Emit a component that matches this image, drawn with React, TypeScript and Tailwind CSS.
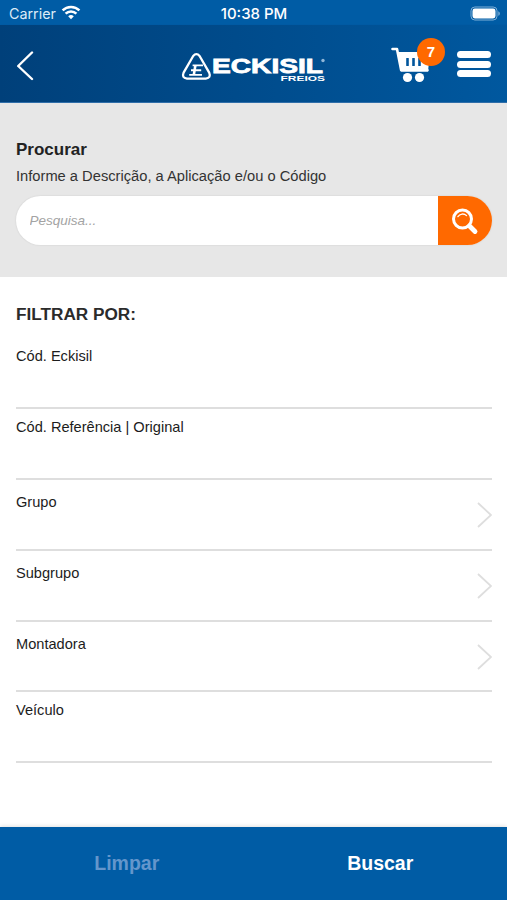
import { useState } from "react";

type Filter = { id: string; label: string; picker: boolean };

const FILTERS: Filter[] = [
  { id: "eckisil", label: "Cód. Eckisil", picker: false },
  { id: "referencia", label: "Cód. Referência | Original", picker: false },
  { id: "grupo", label: "Grupo", picker: true },
  { id: "subgrupo", label: "Subgrupo", picker: true },
  { id: "montadora", label: "Montadora", picker: true },
  { id: "veiculo", label: "Veículo", picker: false },
];

function StatusBar() {
  return (
    <div className="grid h-[25px] grid-cols-3 items-center bg-[#005ca5] pt-[3px] pr-[6px] pl-[9px] font-['Inter',sans-serif] text-[14.3px] leading-none text-white">
      <div className="flex items-center gap-[5px]">
        <span className="text-[#dcebf7]">Carrier</span>
        <svg className="-mt-[2px]" width="20" height="15" viewBox="0 0 20 15" fill="none" stroke="white" strokeWidth="2.5">
          <path d="M1.6 5.4a12 12 0 0 1 16.8 0" />
          <path d="M4.6 8.7a7.6 7.6 0 0 1 10.8 0" />
          <path d="M10 14.2 7.2 11.3a4 4 0 0 1 5.6 0Z" fill="white" stroke="none" />
        </svg>
      </div>
      <span className="-mt-[2px] -ml-[2px] text-center text-[15px] font-medium whitespace-nowrap">10:38 PM</span>
      <svg className="-mt-[2px] justify-self-end" width="31" height="15" viewBox="0 0 31 15">
        <rect x="1" y="1" width="26" height="13" rx="3.8" fill="none" stroke="#7fb0d8" strokeWidth="1" />
        <rect x="2.5" y="2.5" width="23" height="10" rx="2.4" fill="white" />
        <path d="M28.3 5.2c2 .8 2 3.8 0 4.6Z" fill="#7fb0d8" />
      </svg>
    </div>
  );
}

function Logo() {
  return (
    <svg width="147" height="37" viewBox="0 0 147 37" fill="white">
      <path
        d="M13.2 11q3.2-3.6 6.4 0l9.600 16.600q2.200 5.400-3.400 6H7q-5.600-.6-3.400-6Z"
        fill="none"
        stroke="white"
        strokeWidth="2.3"
        strokeLinejoin="round"
      />
      {/* monogram: slanted stem crossed by three bars */}
      <g fill="none" stroke="white" strokeWidth="1.9">
        <path d="M12.600 20.400H23M11 25.200H21.200M9.200 29.900H22" />
        <path d="M15.400 20.400 13.800 29.900" strokeWidth="2.6" />
      </g>
      <text
        x="32"
        y="27.7"
        fontFamily="Liberation Sans, sans-serif"
        fontWeight="700"
        fontSize="20"
        stroke="white"
        strokeWidth="0.8"
        textLength="111"
        lengthAdjust="spacingAndGlyphs"
      >
        ECKISIL
      </text>
      <text
        x="100.500"
        y="35.500"
        fontFamily="Liberation Sans, sans-serif"
        fontWeight="700"
        fontSize="7.800"
        textLength="44.500"
        lengthAdjust="spacingAndGlyphs"
      >
        FREIOS
      </text>
      <circle cx="143" cy="15.500" r="1.700" fill="#8fb6d8" />
    </svg>
  );
}

function Header({ cartCount }: { cartCount: number }) {
  return (
    <header className="flex h-[78px] items-center justify-between border-b border-[#2f6ea9] bg-linear-to-r from-[#00407a] to-[#00589f] px-[16px] shadow-[0_1px_2px_rgba(0,0,0,0.2)]">
      <div className="w-[148px]">
        <button type="button" aria-label="Voltar" className="mt-[4px] block">
          <svg width="18" height="30" viewBox="0 0 18 30" fill="none" stroke="white" strokeWidth="2.4" strokeLinecap="round">
            <path d="M16 1.5 2.2 15 16 28" strokeLinejoin="round" />
          </svg>
        </button>
      </div>
      <Logo />
      <div className="flex w-[148px] items-center justify-end gap-[11.5px] pr-[0.5px]">
        <button type="button" aria-label="Carrinho" className="relative -mt-[7px] block h-[44px] w-[54px]">
          <svg className="mt-[9px]" width="40" height="36" viewBox="0 0 40 36" fill="white">
            <path
              d="M1.5 2H6l4.2 21.2H36.5"
              fill="none"
              stroke="white"
              strokeWidth="2.6"
              strokeLinecap="round"
              strokeLinejoin="round"
            />
            <path d="M6 5h33l-2 19.4H10Z" />
            <g fill="#00559c">
              <rect x="15.2" y="11" width="2.6" height="8" rx="0.5" />
              <rect x="21.2" y="11" width="2.6" height="8" rx="0.5" />
              <rect x="27.2" y="11" width="2.6" height="8" rx="0.5" />
            </g>
            <circle cx="16.5" cy="30.5" r="4.6" />
            <circle cx="28.5" cy="30.5" r="4.6" />
          </svg>
          <span className="absolute top-0 right-0 flex size-[28px] items-center justify-center rounded-full bg-[#ff6900] text-[15px] font-bold text-white">
            {cartCount}
          </span>
        </button>
        <button type="button" aria-label="Menu" className="mt-px flex w-[34px] flex-col gap-[2.5px]">
          <span className="h-[7px] rounded-full bg-white" />
          <span className="h-[7px] rounded-full bg-white" />
          <span className="h-[7px] rounded-full bg-white" />
        </button>
      </div>
    </header>
  );
}

function SearchPanel() {
  const [query, setQuery] = useState("");

  return (
    <section className="h-[174px] bg-[#e7e7e7] pt-[36px] pr-[15px] pl-[16px]">
      <h1 className="text-[17px] leading-[22px] font-bold text-[#222]">Procurar</h1>
      <p className="mt-[4px] text-[14.7px] leading-[22px] text-[#333]">
        Informe a Descrição, a Aplicação e/ou o Código
      </p>
      <div className="mt-[9px] flex h-[49px] overflow-hidden rounded-full bg-white shadow-[0_0_2px_rgba(0,0,0,0.12)]">
        <input
          value={query}
          onChange={(e) => setQuery(e.target.value)}
          placeholder="Pesquisa..."
          className="min-w-0 flex-1 pt-[2px] pl-[13.5px] text-[13.5px] italic outline-none placeholder:text-[#a3a3a3]"
        />
        <button type="button" aria-label="Pesquisar" className="flex w-[54px] items-center justify-center bg-[#ff6900]">
          <svg width="28" height="28" viewBox="0 0 28 28" fill="none" stroke="white" strokeLinecap="round">
            <circle cx="11.5" cy="12" r="9" strokeWidth="3" />
            <path d="m18.5 19 5.5 5.5" strokeWidth="4.8" />
            <path d="M6.9 9.6a5.6 5.6 0 0 1 8.6-1" strokeWidth="1.3" />
          </svg>
        </button>
      </div>
    </section>
  );
}

function FilterRow({ label, picker }: Omit<Filter, "id">) {
  return (
    <div
      className={`flex h-[70.9px] items-start justify-between border-b-2 border-[#dedede] ${
        picker ? "pt-[12px]" : "pt-[8px]"
      }`}
    >
      <span className="text-[14.6px] leading-[20px] text-[#1c1c1c]">{label}</span>
      {picker && (
        <svg className="mt-[10px]" width="15" height="26" viewBox="0 0 15 26" fill="none" stroke="#dedede" strokeWidth="1.8">
          <path d="M1 1 14 13 1 25" />
        </svg>
      )}
    </div>
  );
}

export default function App() {
  return (
    <div className="flex h-[900px] w-[507px] flex-col overflow-hidden bg-white font-['Liberation_Sans',Arial,sans-serif]">
      <StatusBar />
      <Header cartCount={7} />
      <SearchPanel />

      <main className="flex-1 pt-[26px] pr-[15px] pl-[16px]">
        <h2 className="h-[35px] text-[17.2px] leading-[22px] font-bold text-[#2b2b2b]">FILTRAR POR:</h2>
        {FILTERS.map(({ id, label, picker }) => (
          <FilterRow key={id} label={label} picker={picker} />
        ))}
      </main>

      <footer className="grid h-[73px] grid-cols-2 bg-[#005ca5] text-[19.5px] font-bold shadow-[0_-1px_4px_rgba(0,0,0,0.12)]">
        <button type="button" className="text-[#6496cc]">
          Limpar
        </button>
        <button type="button" className="text-white">
          Buscar
        </button>
      </footer>
    </div>
  );
}
